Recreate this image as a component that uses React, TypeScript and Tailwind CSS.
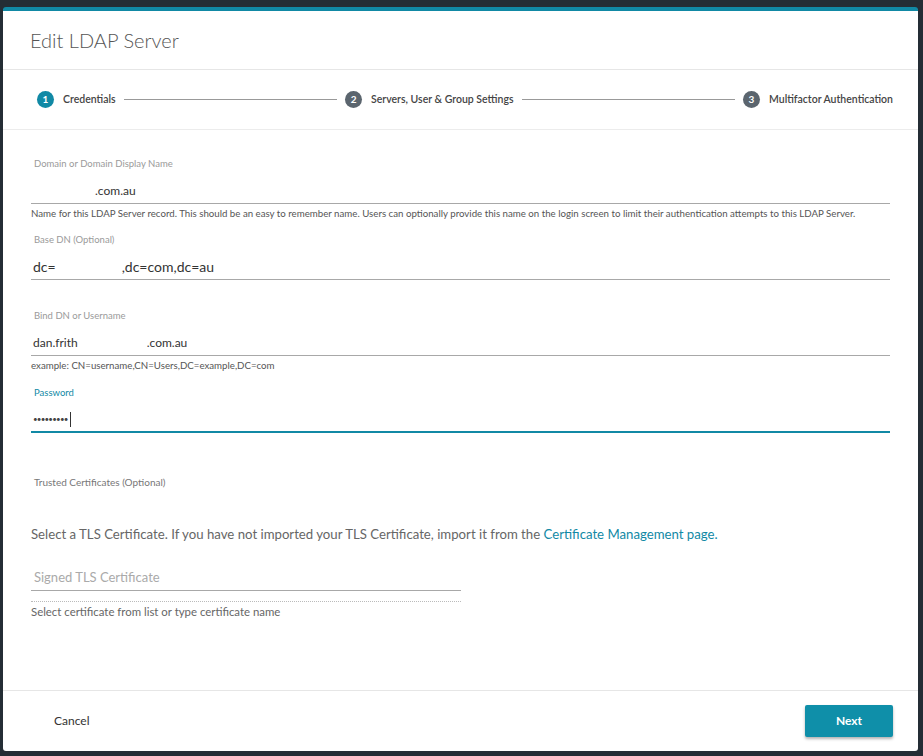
import React from "react";

const font = { fontFamily: "Lato, 'Noto Sans', sans-serif" };

function Step({ n, label, active }: { n: number; label: string; active?: boolean }) {
  return (
    <div className="flex items-center gap-[9px] shrink-0">
      <span
        className={`flex h-[17px] w-[17px] items-center justify-center rounded-full text-[10px] font-bold text-white ${
          active ? "bg-[#1189a5]" : "bg-[#5b656e]"
        }`}
      >
        {n}
      </span>
      <span className="text-[10.5px] font-semibold text-[#444]">{label}</span>
    </div>
  );
}

function Field({
  label,
  children,
  help,
  focused,
  size = "text-[12px]",
}: {
  label: string;
  children: React.ReactNode;
  help?: string;
  focused?: boolean;
  size?: string;
}) {
  return (
    <div>
      <div className={`pl-[3px] text-[9.5px] ${focused ? "text-[#1189a5]" : "text-[#9a9a9a]"}`}>{label}</div>
      <div
        className={`mt-[7px] flex h-[26px] items-center pl-[2px] text-[#333] ${size} ${
          focused ? "border-b-2 border-[#1189a5]" : "border-b border-[#a8a8a8]"
        }`}
      >
        {children}
      </div>
      {help && <div className="mt-[2px] text-[9.7px] text-[#555]">{help}</div>}
    </div>
  );
}

export default function App() {
  return (
    <div className="h-[756px] w-[923px] overflow-hidden bg-[#242d35] pl-[3px] pt-[7px]" style={font}>
      <div className="relative h-[744px] w-[915px] overflow-hidden rounded-[3px] border-t-4 border-[#1189a5] bg-white flex flex-col">
        <div className="flex h-[59px] items-center border-b border-[#e6e6e6] pl-[27px]">
          <h1 className="text-[20px] font-light text-[#555]">Edit LDAP Server</h1>
        </div>

        <div className="flex h-[60px] items-center gap-[8px] border-b border-[#ececec] pl-[34px] pr-[25px]">
          <Step n={1} label="Credentials" active />
          <div className="h-px flex-1 bg-[#999]" />
          <Step n={2} label="Servers, User & Group Settings" />
          <div className="h-px flex-1 bg-[#999]" />
          <Step n={3} label="Multifactor Authentication" />
        </div>

        <div className="flex-1 px-[28px] pt-[27px]">
          <Field
            label="Domain or Domain Display Name"
            help="Name for this LDAP Server record. This should be an easy to remember name. Users can optionally provide this name on the login screen to limit their authentication attempts to this LDAP Server."
          >
            <span className="inline-block w-[62px]" />
            .com.au
          </Field>

          <div className="mt-[12px]">
            <Field label="Base DN (Optional)" size="text-[14px]">
              dc=
              <span className="inline-block w-[66px]" />
              ,dc=com,dc=au
            </Field>
          </div>

          <div className="mt-[29px]">
            <Field label="Bind DN or Username" help="example: CN=username,CN=Users,DC=example,DC=com">
              dan.frith
              <span className="inline-block w-[69px]" />
              .com.au
            </Field>
          </div>

          <div className="mt-[13px]">
            <Field label="Password" focused>
              <span className="text-[8px] tracking-[-0.8px] text-[#444]">•••••••••</span>
              <span className="ml-[2px] h-[15px] w-px bg-[#333]" />
            </Field>
          </div>

          <div className="mt-[42px] pl-[3px] text-[10px] text-[#777]">Trusted Certificates (Optional)</div>

          <p className="mt-[35px] text-[13.2px] text-[#666]">
            Select a TLS Certificate. If you have not imported your TLS Certificate, import it from the{" "}
            <span className="text-[#1189a5]">Certificate Management page.</span>
          </p>

          <div className="mt-[20px] w-[430px]">
            <div className="flex h-[26px] items-center border-b border-[#a8a8a8] pl-[3px] text-[13px] text-[#aaa]">
              Signed TLS Certificate
            </div>
            <div className="mt-[10px] border-t border-dotted border-[#bbb]" />
            <div className="mt-[1px] text-[11.4px] text-[#666]">Select certificate from list or type certificate name</div>
          </div>
        </div>

        <div className="flex h-[61px] items-center justify-between border-t border-[#e6e6e6] pl-[51px] pr-[25px]">
          <button className="text-[12px] text-[#333]">Cancel</button>
          <button className="h-[32px] w-[88px] rounded-[2px] bg-[#0f8fa9] text-[12px] font-bold text-white shadow-[0_2px_3px_rgba(0,0,0,0.3)]">
            Next
          </button>
        </div>
      </div>
    </div>
  );
}
